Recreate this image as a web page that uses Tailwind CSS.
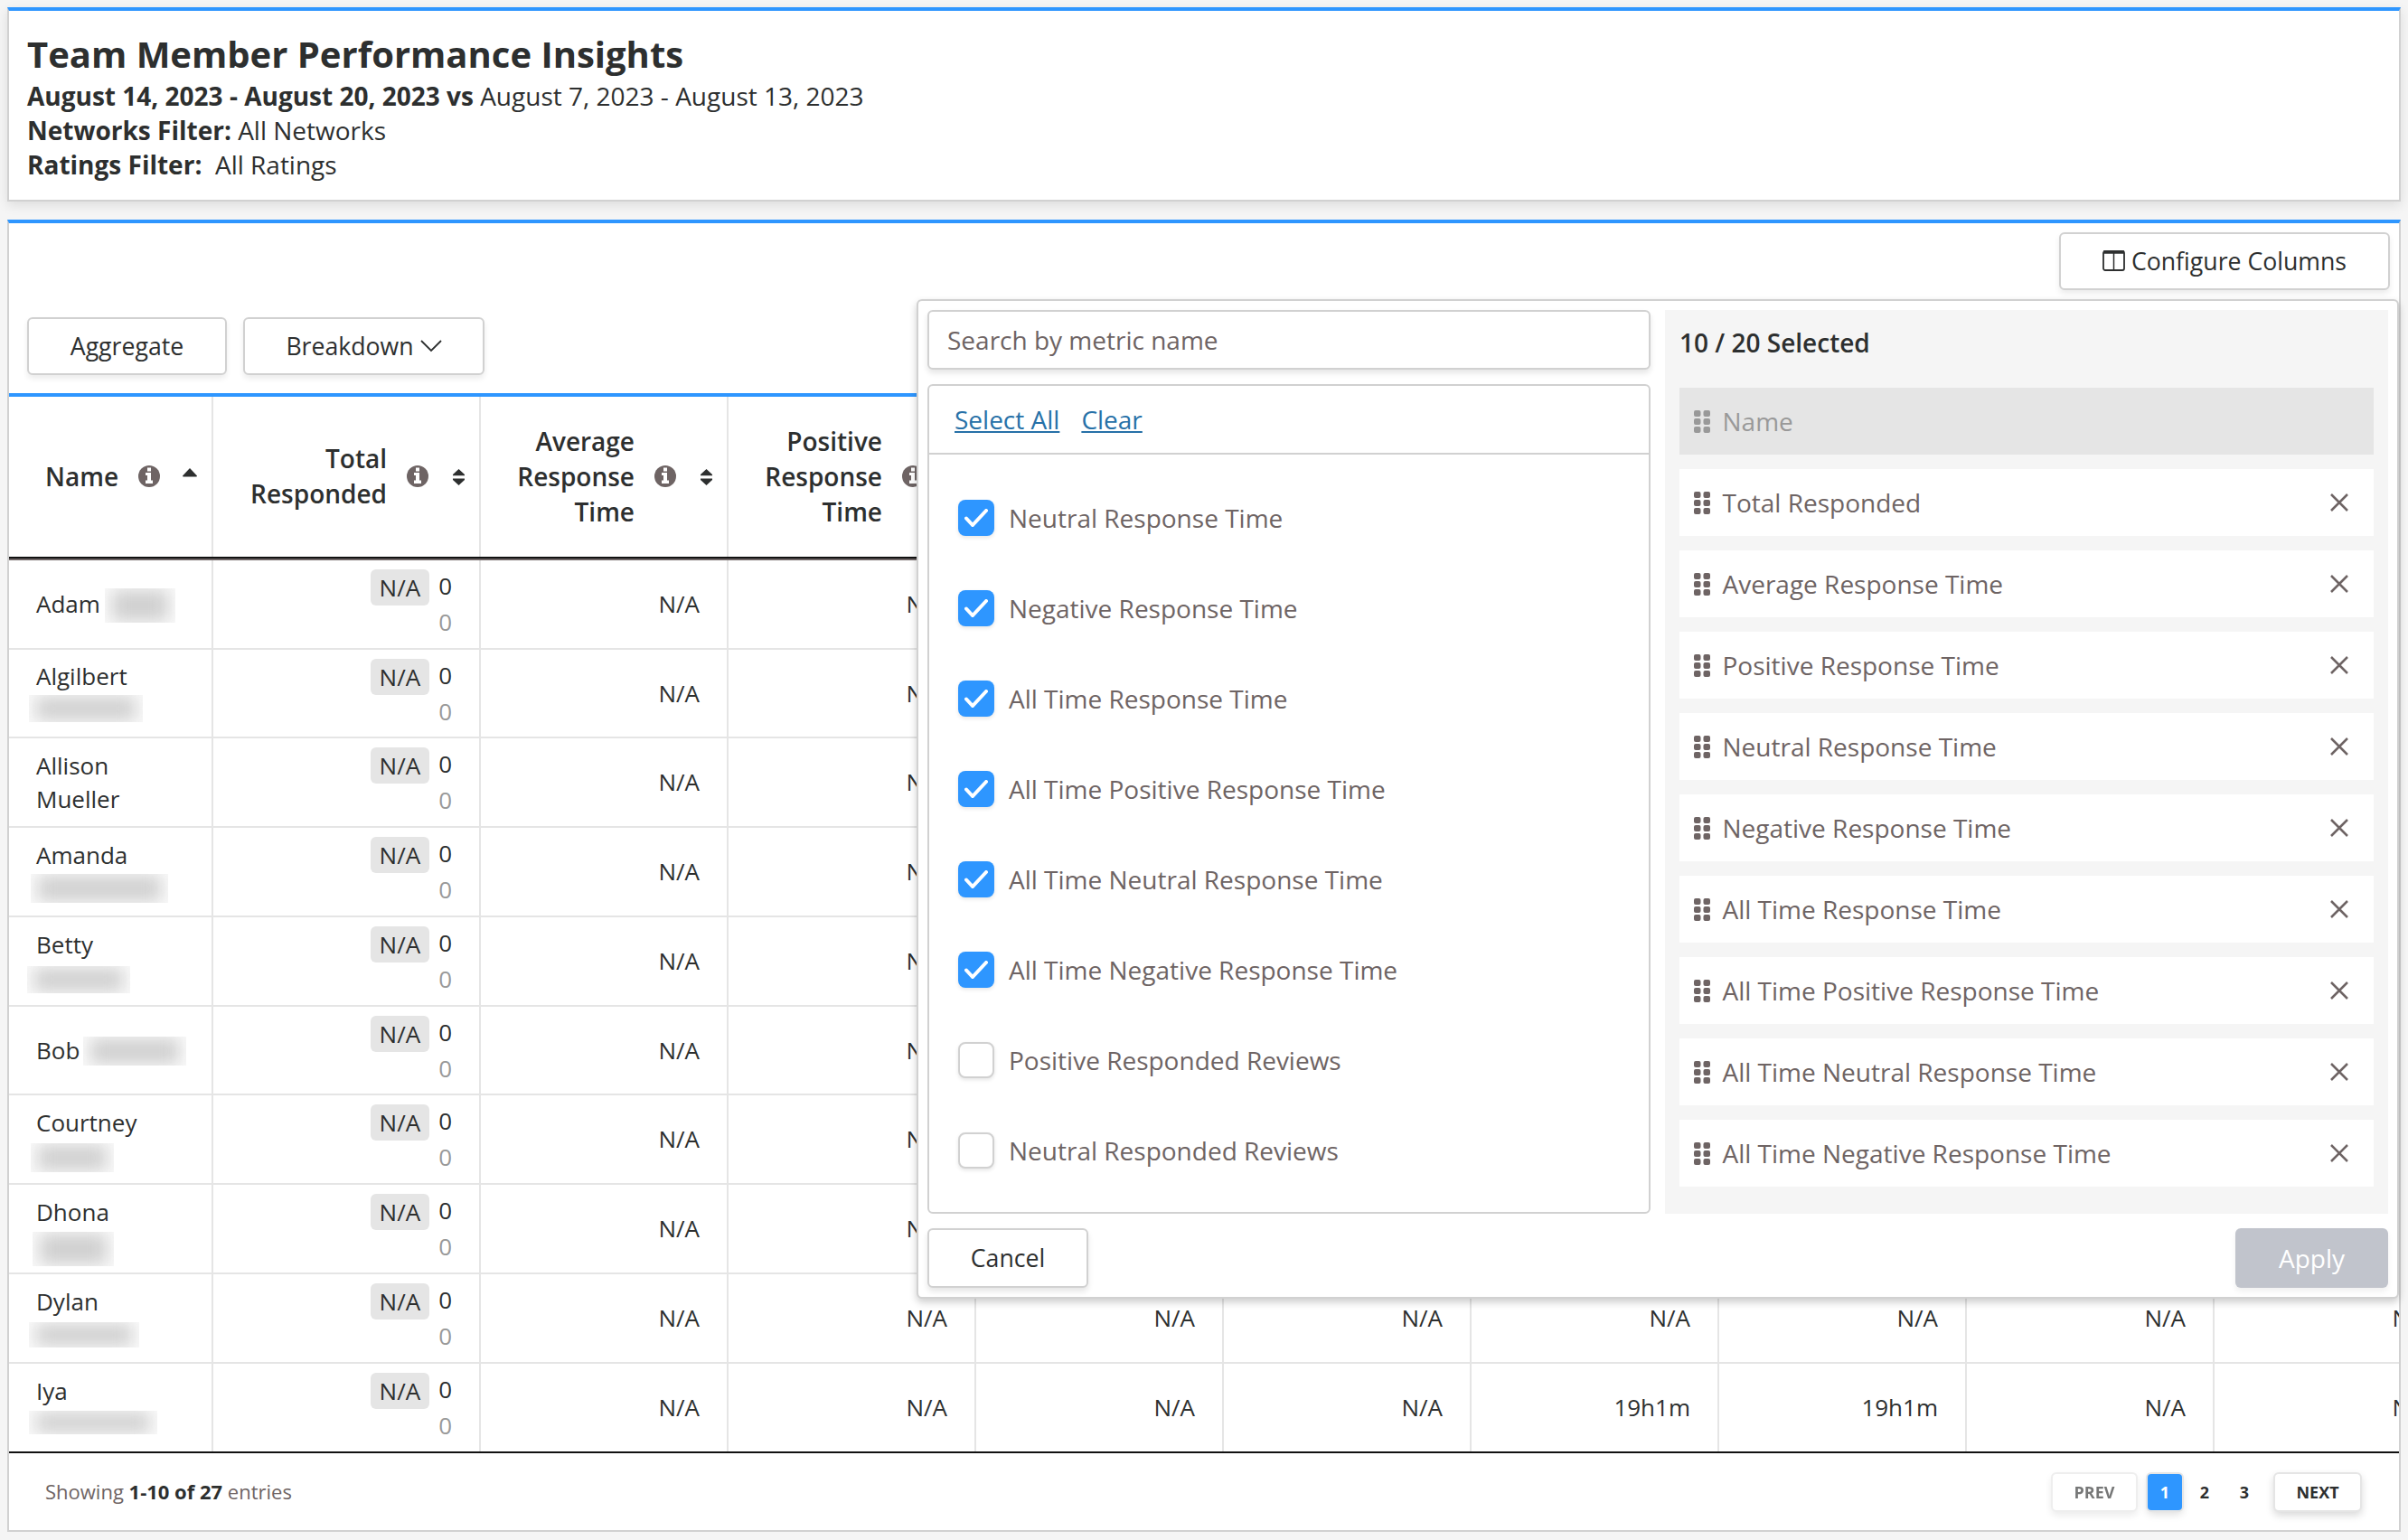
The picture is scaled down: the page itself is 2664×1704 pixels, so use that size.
<!DOCTYPE html>
<html lang="en">
	<head>
		<meta charset="UTF-8" />
		<meta name="viewport" content="width=device-width, initial-scale=1.0" />
		<title>Team Member Performance Insights</title>
		<script src="https://cdn.jsdelivr.net/npm/@tailwindcss/browser@4"></script>
	</head>
	<body
		class="bg-[#f5f5f5] h-[1704px] overflow-hidden p-2 flex flex-col gap-5 font-['Open_Sans',sans-serif] text-[#2d2f2f] text-[28px] leading-[38px]"
	>
		<header
			class="h-[215px] shrink-0 bg-white border-2 border-t-4 border-[#d1d1d1] border-t-[#2e96ff] shadow-[0_4px_12px_rgba(0,0,0,0.1)] px-5 pt-[21px]"
		>
			<h1 class="text-[40px] leading-[54px] font-bold">Team Member Performance Insights</h1>
			<p><b>August 14, 2023 - August 20, 2023 vs</b> August 7, 2023 - August 13, 2023</p>
			<p><b>Networks Filter:</b> All Networks</p>
			<p><b>Ratings Filter:</b>&nbsp; All Ratings</p>
		</header>

		<main
			class="relative h-[1452px] shrink-0 bg-white border-2 border-t-4 border-[#d1d1d1] border-t-[#2e96ff] flex flex-col"
		>
			<div class="flex justify-end pt-[10px] pr-[10px]">
				<button
					class="w-[366px] h-16 pb-px flex items-center justify-center gap-[7px] bg-white border-2 border-[#d1d1d1] rounded-md shadow-[0_4px_6px_rgba(0,0,0,0.08)] text-[26.66px]"
				>
					<svg class="w-[25px] h-[23px]" viewBox="0 0 25 23" fill="none" stroke="currentColor" stroke-width="1.8">
						<rect x="1" y="1" width="23" height="21" rx="2" />
						<path d="M1 2h23" stroke-width="3.5" />
						<path d="M12.5 2v20" stroke-width="1.5" />
					</svg>
					Configure Columns
				</button>
			</div>

			<div class="flex gap-[18px] px-5 pt-[30px] pb-5 text-[26.66px]">
				<button class="w-[221px] h-16 bg-white border-2 border-[#d1d1d1] rounded-md shadow-[0_4px_6px_rgba(0,0,0,0.08)]">
					Aggregate
				</button>
				<button
					class="w-[267px] h-16 flex items-center justify-center gap-[7px] bg-white border-2 border-[#d1d1d1] rounded-md shadow-[0_4px_6px_rgba(0,0,0,0.08)]"
				>
					Breakdown
					<svg class="w-6 h-[14px]" viewBox="0 0 24 14" fill="none" stroke="currentColor" stroke-width="1.8">
						<path d="M1 1l11 11L23 1" />
					</svg>
				</button>
			</div>

			<!-- The table is wider than the card, the last column is cut off -->
			<div class="w-full overflow-hidden border-t-4 border-[#2e96ff] text-[26px]">
				<div id="tableHead" class="flex h-[177px] w-max text-[28px] font-semibold leading-[39px]"></div>
				<div class="h-[4px] bg-[#111] border-b-2 border-[#6e6464]"></div>
				<div id="tableBody" class="w-max leading-[37px]"></div>
				<div class="h-[2px] -mt-[2px] relative bg-[#111]"></div>
			</div>

			<footer class="flex-1 flex items-center justify-between pl-10 pr-[41px] text-[22px] text-[#6e6464]">
				<p class="pb-[2px]">Showing <b class="text-[#2d2f2f]">1-10 of 27</b> entries</p>
				<nav class="flex items-center gap-[6px] text-[18px] font-bold text-[#2d2f2f]">
					<button class="w-24 h-11 mr-[5px] bg-white border-2 border-[#e5e5e5] rounded-md shadow-[0_4px_8px_rgba(0,0,0,0.12)] opacity-65">PREV</button>
					<button class="w-[38px] h-10 bg-[#2e96ff] text-white rounded-sm shadow-[0_0_0_2px_#e5e5e5,0_4px_10px_rgba(0,0,0,0.15)]">1</button>
					<button class="w-[38px] h-[42px]">2</button>
					<button class="w-[38px] h-[42px]">3</button>
					<button class="w-[98px] h-11 ml-[7px] bg-white border-2 border-[#e5e5e5] rounded-md shadow-[0_4px_8px_rgba(0,0,0,0.15)]">NEXT</button>
				</nav>
			</footer>

			<!-- Configure columns dropdown -->
			<section
				class="absolute top-[84px] right-0 w-[1640px] h-[1106px] p-[10px] flex flex-col gap-4 bg-white border-2 border-[#d1d1d1] rounded-md shadow-[0_4px_8px_rgba(0,0,0,0.2)] text-[#6e6464]"
			>
				<div class="flex gap-4 h-[1000px]">
					<div class="w-[800px] flex flex-col gap-4">
						<input
							type="text"
							placeholder="Search by metric name"
							class="w-full h-[66px] px-5 bg-white border-2 border-[#d1d1d1] rounded-md shadow-[0_4px_6px_rgba(0,0,0,0.1)] placeholder:text-[#6e6464]"
						/>
						<div class="flex-1 border-2 border-[#d1d1d1] rounded-md">
							<div class="h-[76px] flex items-center gap-6 pl-7 border-b-2 border-[#d1d1d1] text-[#2771a8]">
								<a class="underline decoration-2 underline-offset-2">Select All</a>
								<a class="underline decoration-2 underline-offset-2">Clear</a>
							</div>
							<ul id="metricList" class="pt-[50px] pl-8 flex flex-col gap-[60px]"></ul>
						</div>
					</div>
					<div class="w-[800px] bg-[#f5f5f5] px-4 pt-4">
						<h2 class="h-[70px] pt-px font-semibold text-[#2d2f2f]">10 / 20 Selected</h2>
						<ul id="selectedList" class="flex flex-col gap-4"></ul>
					</div>
				</div>
				<div class="flex justify-between">
					<button class="w-[178px] h-[66px] pb-px bg-white border-2 border-[#d1d1d1] rounded-md shadow-[0_4px_6px_rgba(0,0,0,0.1)] text-[#2d2f2f] text-[26.66px]">
						Cancel
					</button>
					<button class="w-[169px] h-[66px] bg-[#c1c4cc] rounded-md shadow-[0_4px_6px_rgba(0,0,0,0.06)] text-white">Apply</button>
				</div>
			</section>
		</main>
	</body>

	<script>
		const infoIcon = `
			<svg class="w-6 h-6 shrink-0" viewBox="0 0 24 24">
				<circle cx="12" cy="12" r="12" fill="#6e6464" />
				<path fill="#fff" d="M10 2.5h4v4h-4zM8 8h6v8.5h2V20H8v-3.5h2V11H8z" />
			</svg>`;
		const sortIcon = `
			<svg class="w-[13px] h-[18px] shrink-0" viewBox="0 0 13 18" fill="currentColor">
				<path d="M6.5 0L13 6v1.3H0V6zM6.5 18L13 12v-1.5H0V12z" />
			</svg>`;
		const sortUpIcon = `
			<svg class="w-4 h-[10px] shrink-0" viewBox="0 0 16 10" fill="currentColor">
				<path d="M8 0l8 8.5q0 1-1 1H1q-1 0-1-1z" />
			</svg>`;

		const columns = [
			"Average<br>Response<br>Time",
			"Positive<br>Response<br>Time",
			"Neutral<br>Response<br>Time",
			"Negative<br>Response<br>Time",
			"All Time<br>Response<br>Time",
			"All Time<br>Positive",
			"All Time<br>Neutral",
			"All Time<br>Negative",
		];

		document.getElementById("tableHead").innerHTML =
			`<div class="w-[226px] flex items-center pl-10 border-r-2 border-[#e5e5e5]">
				Name
				<span class="ml-[22px] -mt-[2px]">${infoIcon}</span>
				<span class="ml-[25px] -mt-[10px]">${sortUpIcon}</span>
			</div>
			<div class="w-[296px] flex items-center justify-end pr-4 border-r-2 border-[#e5e5e5] text-right">
				<span class="pb-px">Total<br>Responded</span>
				<span class="ml-[22px] -mt-[2px]">${infoIcon}</span>
				<span class="ml-[27px] mt-[1px]">${sortIcon}</span>
			</div>` +
			columns
				.map(
					(name) => `
			<div class="w-[274px] flex items-center justify-end pr-4 border-r-2 border-[#e5e5e5] text-right">
				<span>${name}</span>
				<span class="ml-[22px] -mt-[2px]">${infoIcon}</span>
				<span class="ml-[27px] mt-[1px]">${sortIcon}</span>
			</div>`
				)
				.join("");

		// blur: [left, top, width, height] of the hidden surname inside the cell
		const rows = [
			{ name: "Adam", height: 99, blur: [106, 31, 78, 38] },
			{ name: "Algilbert", height: 98, blur: [22, 50, 126, 30] },
			{ name: "Allison<br>Mueller", height: 99 },
			{ name: "Amanda", height: 99, blur: [24, 51, 152, 32] },
			{ name: "Betty", height: 99, blur: [20, 54, 114, 30] },
			{ name: "Bob", height: 98, blur: [82, 33, 114, 32] },
			{ name: "Courtney", height: 99, blur: [24, 53, 92, 32] },
			{ name: "Dhona", height: 99, blur: [26, 52, 90, 38] },
			{ name: "Dylan", height: 99, blur: [22, 53, 122, 28] },
			{ name: "Iya", height: 99, blur: [22, 52, 142, 26] },
		];

		document.getElementById("tableBody").innerHTML = rows
			.map((row) => {
				const oneLine = row.name === "Adam" || row.name === "Bob";
				const lastName = row.blur && !oneLine ? "<br>&nbsp;" : "";
				const cells = columns.map((c, i) => {
					const value = row.name === "Iya" && (i === 4 || i === 5) ? "19h1m" : "N/A";
					return `<div class="w-[274px] flex items-center justify-end pr-[30px] border-r-2 border-[#e5e5e5]">${value}</div>`;
				});
				const blur = row.blur
					? `<span class="absolute overflow-hidden bg-[#fafafa]" style="left:${row.blur[0]}px;top:${row.blur[1]}px;width:${row.blur[2]}px;height:${row.blur[3]}px"><span class="block h-full px-2 py-[2px] blur-[9px]"><span class="block h-full bg-[#d0d0d0]"></span></span></span>`
					: "";
				return `
			<div class="flex border-b-2 border-[#e5e5e5]" style="height:${row.height}px">
				<div class="relative w-[226px] flex items-center pl-[30px] border-r-2 border-[#e5e5e5]"><p>${row.name}${lastName}</p>${blur}</div>
				<div class="w-[296px] flex justify-end gap-[10px] pr-[30px] pt-[10px] border-r-2 border-[#e5e5e5]">
					<span class="h-10 px-[10px] leading-10 bg-[#e5e5e5] rounded-md">N/A</span>
					<span class="leading-10 -mt-[2px]">0<br><span class="text-[#999]">0</span></span>
				</div>
				${cells.join("")}
			</div>`;
			})
			.join("");

		const metrics = [
			["Neutral Response Time", true],
			["Negative Response Time", true],
			["All Time Response Time", true],
			["All Time Positive Response Time", true],
			["All Time Neutral Response Time", true],
			["All Time Negative Response Time", true],
			["Positive Responded Reviews", false],
			["Neutral Responded Reviews", false],
		];
		const checked = `
			<span class="w-10 h-10 flex items-center justify-center bg-[#2e96ff] rounded-lg shadow-[0_2px_4px_rgba(0,0,0,0.1)]">
				<svg class="w-[26px] h-5" viewBox="0 0 26 20" fill="none" stroke="#fff" stroke-width="4" stroke-linecap="round">
					<path d="M2 10.5l7 7.5L24 2" />
				</svg>
			</span>`;
		const unchecked = `<span class="w-10 h-10 bg-white border-2 border-[#d1d1d1] rounded-lg shadow-[0_2px_4px_rgba(0,0,0,0.1)]"></span>`;
		document.getElementById("metricList").innerHTML = metrics
			.map(([name, on]) => `<li class="h-10 flex items-center gap-4">${on ? checked : unchecked}${name}</li>`)
			.join("");

		const selected = [
			"Name",
			"Total Responded",
			"Average Response Time",
			"Positive Response Time",
			"Neutral Response Time",
			"Negative Response Time",
			"All Time Response Time",
			"All Time Positive Response Time",
			"All Time Neutral Response Time",
			"All Time Negative Response Time",
		];
		const grip = `
			<svg class="w-[18px] h-[25px] mr-[13.5px]" viewBox="0 0 18 25" fill="currentColor">
				<rect width="7.5" height="7" rx="2" /><rect x="10.5" width="7.5" height="7" rx="2" />
				<rect y="9" width="7.5" height="7" rx="2" /><rect x="10.5" y="9" width="7.5" height="7" rx="2" />
				<rect y="18" width="7.5" height="7" rx="2" /><rect x="10.5" y="18" width="7.5" height="7" rx="2" />
			</svg>`;
		const closeIcon = `
			<svg class="w-5 h-5 ml-auto" viewBox="0 0 20 20" fill="none" stroke="currentColor" stroke-width="2.5">
				<path d="M1 1l18 18M19 1L1 19" />
			</svg>`;
		document.getElementById("selectedList").innerHTML = selected
			.map((name, i) =>
				i === 0
					? `<li class="h-[74px] flex items-center pl-4 pr-7 bg-[#e5e5e5] text-[#999]">${grip}${name}</li>`
					: `<li class="h-[74px] flex items-center pl-4 pr-7 bg-white">${grip}${name}${closeIcon}</li>`
			)
			.join("");
	</script>
</html>
